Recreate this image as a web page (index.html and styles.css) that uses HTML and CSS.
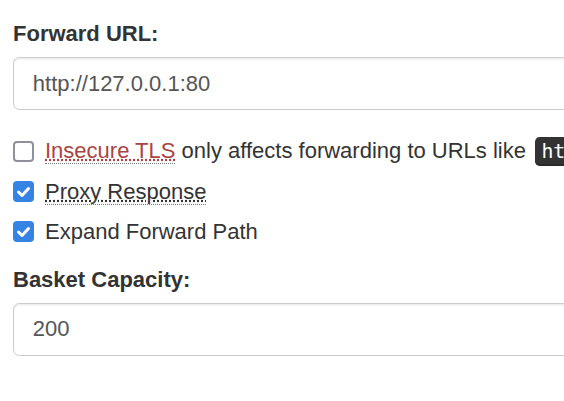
FILE: index.html
```html
<!DOCTYPE html>
<html lang="en">
<head>
<meta charset="utf-8">
<title>Basket configuration</title>
<link rel="stylesheet" href="styles.css">
</head>
<body>
<form class="page">
  <div class="form-group">
    <label class="control-label" for="forward-url">Forward URL:</label>
    <input class="form-control" id="forward-url" type="text" value="http://127.0.0.1:80">
  </div>
  <div class="checks">
    <div class="checkbox">
      <label class="check-label">
        <span class="cb"></span>
        <span class="text"><abbr class="text-danger" title="Skip TLS certificate verification">Insecure TLS</abbr> only affects forwarding to URLs like <kbd>https://</kbd></span>
      </label>
    </div>
    <div class="checkbox">
      <label class="check-label">
        <span class="cb checked"><svg viewBox="0 0 21 21" width="21" height="21"><path d="M5.5 11 L9 14.5 L15.5 7.5" fill="none" stroke="#fff" stroke-width="3" stroke-linecap="round" stroke-linejoin="round"/></svg></span>
        <span class="text"><abbr title="Proxy the response of the forward URL">Proxy Response</abbr></span>
      </label>
    </div>
    <div class="checkbox">
      <label class="check-label">
        <span class="cb checked"><svg viewBox="0 0 21 21" width="21" height="21"><path d="M5.5 11 L9 14.5 L15.5 7.5" fill="none" stroke="#fff" stroke-width="3" stroke-linecap="round" stroke-linejoin="round"/></svg></span>
        <span class="text">Expand Forward Path</span>
      </label>
    </div>
  </div>
  <div class="form-group">
    <label class="control-label" for="capacity">Basket Capacity:</label>
    <input class="form-control" id="capacity" type="text" value="200">
  </div>
</form>
</body>
</html>
```
FILE: styles.css
```css
html, body {
  margin: 0;
  padding: 0;
  background: #fff;
  overflow: hidden;
}

body {
  font-family: "Liberation Sans", Arial, sans-serif;
  font-size: 22px;
  line-height: 31.43px;
  color: #333;
}

.page {
  width: 720px;
  padding: 18px 0 0 13px;
}

.form-group {
  display: flex;
  flex-direction: column;
}

.control-label {
  font-weight: bold;
  margin-bottom: 7.86px;
}

.form-control {
  box-sizing: border-box;
  height: 52.5px;
  padding: 9.43px 18.86px;
  font: inherit;
  color: #555;
  background: #fff;
  border: 1px solid #ccc;
  border-radius: 6.3px;
  box-shadow: inset 0 1.57px 1.57px rgba(0, 0, 0, 0.075);
  outline: none;
}

.checks {
  display: flex;
  flex-direction: column;
  gap: 8.6px;
  margin: 25px 0 16.5px;
}

.check-label {
  display: flex;
  align-items: center;
  white-space: nowrap;
}

.cb {
  box-sizing: border-box;
  flex: none;
  width: 21px;
  height: 21px;
  margin-right: 11px;
  border: 2.5px solid #8f8f9d;
  border-radius: 4px;
  background: #fff;
}

.cb.checked {
  border: none;
  background: #3584e4;
}

.cb svg {
  display: block;
}

abbr {
  text-decoration: underline dotted;
  text-underline-offset: 2px;
  border-bottom: 1px dotted #777;
  cursor: help;
}

.text-danger {
  color: #a94442;
}

kbd {
  margin-left: 3px;
  font-family: "DejaVu Sans Mono", "Liberation Mono", monospace;
  font-size: 19.8px;
  padding: 3.14px 6.29px;
  color: #fff;
  background: #333;
  border-radius: 4.7px;
  box-shadow: inset 0 -1.57px 0 rgba(0, 0, 0, 0.25);
}
```
